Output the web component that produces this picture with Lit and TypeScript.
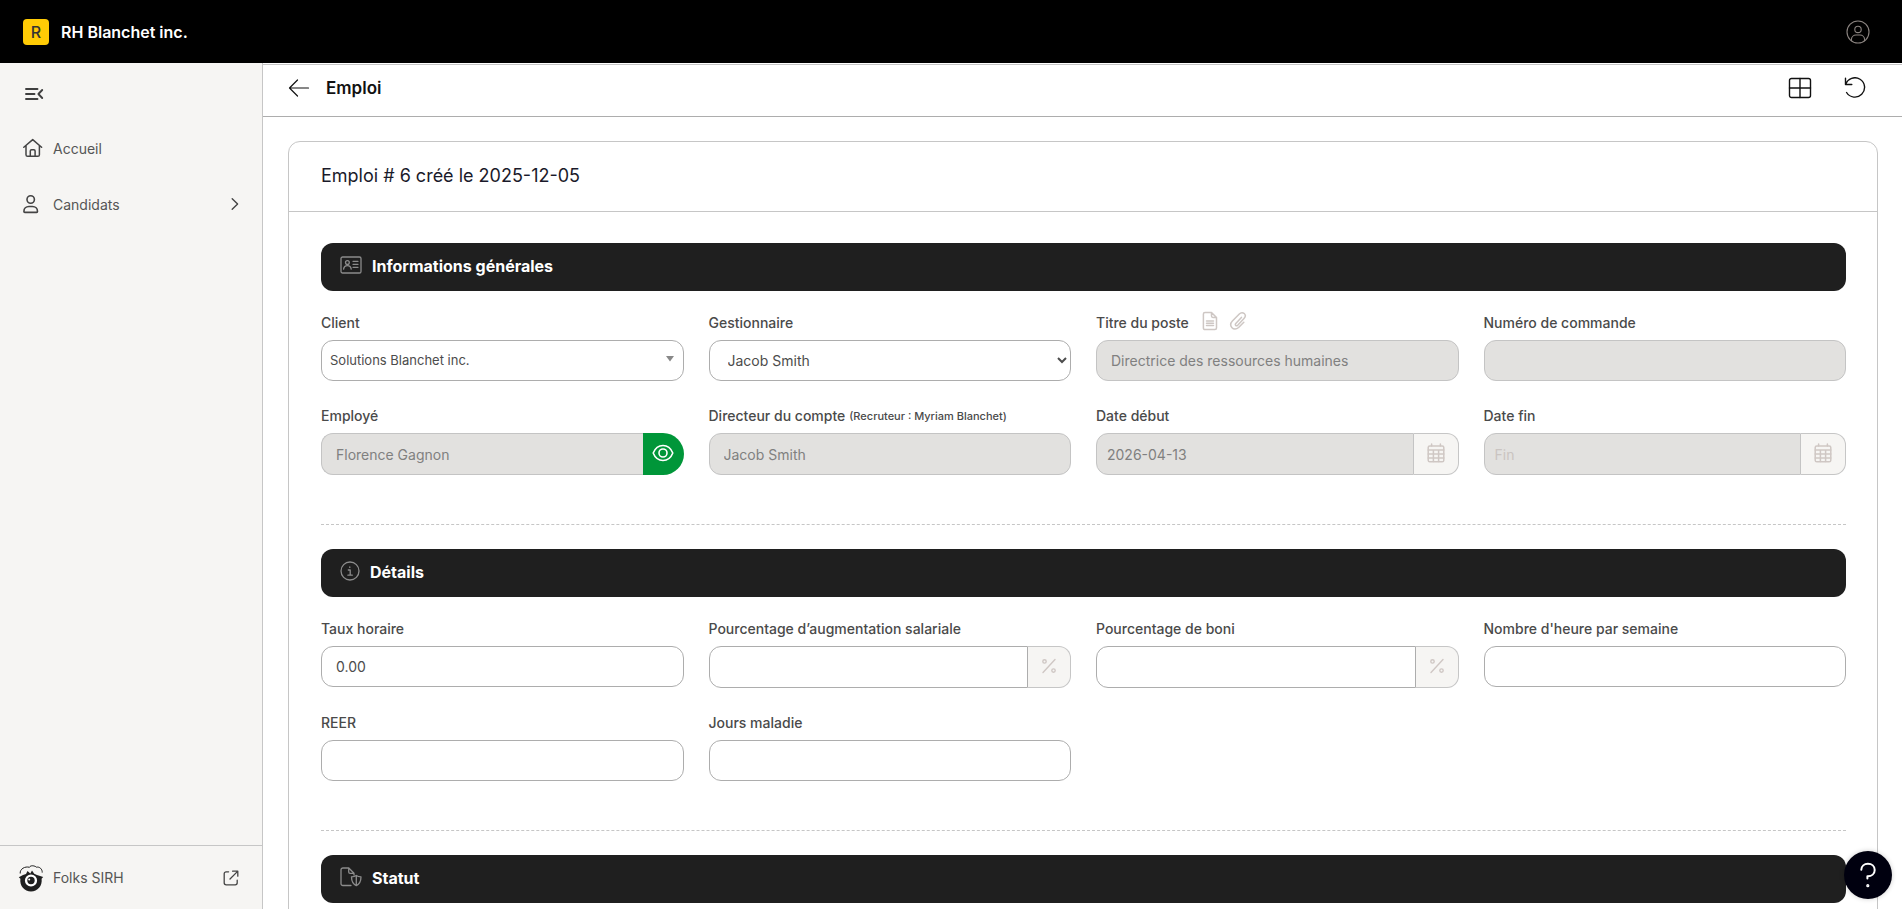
import { LitElement, html, css, svg, nothing, type TemplateResult } from "lit";
import { customElement, property } from "lit/decorators.js";

const line = (w: number, h: number, box: string, body: TemplateResult, stroke = 1.5) => html`
  <svg width=${w} height=${h} viewBox=${box} fill="none" stroke="currentColor" stroke-width=${stroke}
    stroke-linecap="round" stroke-linejoin="round" aria-hidden="true">${body}</svg>`;

const icons = {
  user: () => line(24, 24, "0 0 24 24", svg`<circle cx="12" cy="12" r="11"/><circle cx="12" cy="9.4" r="3.2"/><path d="M5.4 20.6v-1.2a4.6 4.6 0 0 1 4.6-4.4h4a4.6 4.6 0 0 1 4.6 4.4v1.2"/>`, 1.1),
  collapse: () => line(20, 14, "0 0 20 14", svg`<path d="M2 2h11.500M2 7h8.500M2 12h11.500M18.200 3 14.400 7l3.800 4"/>`, 1.9),
  home: () => line(20, 20, "0 0 20 20", svg`<path d="M.8 9.200 9.700 1.600l8.900 7.600M3 7.500v9.200c0 1 .6 1.600 1.600 1.600h10.200c1 0 1.600-.6 1.600-1.600V7.500M7.300 18.200v-5.200c0-.8.4-1.200 1.200-1.200h2.400c.8 0 1.200.4 1.200 1.200v5.200"/>`),
  person: () => line(16, 20, "0 0 16 20", svg`<circle cx="7.700" cy="5.500" r="3.700"/><path d="M.9 17.500c0-3 2.200-5 5-5h3.600c2.800 0 5 2 5 5 0 .6-.3.900-.9.900H1.800c-.6 0-.9-.3-.9-.9z"/>`, 1.6),
  chevron: () => line(8, 14, "0 0 8 14", svg`<path d="M1.200 1.700 6.600 7 1.200 12.300"/>`, 1.4),
  external: () => line(16, 16, "0 0 16 16", svg`<path d="M5.600 1.800H3.200C2 1.800 1.200 2.600 1.200 3.800v9c0 1.200.8 2 2 2h9c1.200 0 2-.8 2-2v-2.600M9.600 1.200h5.200v5M14.600 1.400 7 9"/>`, 1.3),
  back: () => line(22, 18, "0 0 22 18", svg`<path d="M9.500 1 1.500 9l8 8M1.500 9h19"/>`, 1.2),
  grid: () => line(24, 22, "0 0 24 22", svg`<rect x="1.500" y="1.500" width="21" height="19" rx="2"/><path d="M12 1.500v19M1.500 11h21"/>`, 1.4),
  reset: () => line(22, 22, "0 0 22 22", svg`<path d="M1.500 1.200v6.300h6.300M1.700 7.300A9.700 9.700 0 1 1 2.600 15.500"/>`, 1.4),
  card: () => line(22, 18, "0 0 22 18", svg`<rect x="1" y="1" width="20" height="16" rx="1.600"/><circle cx="7.400" cy="6.500" r="1.900"/><path d="M3.600 13.200c.3-2.400 1.700-3.500 3.800-3.500s3.500 1.100 3.800 3.500M13 5.300h5M13 8.300h5M13 11.300h5"/>`, 1.300),
  info: () => line(20, 20, "0 0 20 20", svg`<circle cx="10" cy="10" r="9"/><path d="M8.300 9h1.900v5M7.900 14.200h4.400M9.800 5.900v.5"/>`, 1.300),
  shield: () => line(22, 20, "0 0 22 20", svg`<path d="M11 18.500H3c-1.200 0-2-.7-2-1.800V2.800C1 1.700 1.800 1 3 1h5.800L14 6.200V8M8.700 1v4c0 .9.500 1.400 1.400 1.400H14M11.500 9.800c1.800 0 3.300-.3 4.800-1.300 1.500 1 3 1.300 4.700 1.300 0 4.400-1.300 7.200-4.700 8.900-3.500-1.700-4.800-4.500-4.800-8.900zM16.300 8.600v10"/>`, 1.300),
  doc: () => line(16, 20, "0 0 16 20", svg`<path d="M3 1.500h6.500L14.500 6.500V17c0 1-.6 1.500-1.600 1.500H3c-1 0-1.600-.5-1.600-1.500V3c0-1 .6-1.500 1.600-1.500zM9.500 1.700V5c0 .9.500 1.400 1.400 1.400h3.400M4.500 10h7M4.500 12.300h7M4.500 14.600h7"/>`, 1.500),
  clip: () => line(18, 20, "0 0 18 20", svg`<path d="M12.400 6.400 6.800 12.400c-1.400 1.500.5 3.200 1.900 1.800l6.300-6.600c3.500-3.700-1.300-8.200-4.700-4.600L3.400 10.100c-4.300 4.500 1.200 11 6.200 6.400l5.200-5.300"/>`, 1.500),
  eye: () => line(22, 18, "0 0 22 18", svg`<path d="M1.200 9C3 4.500 6.600 1.500 11 1.500S19 4.500 20.800 9C19 13.500 15.400 16.500 11 16.500S3 13.500 1.200 9z"/><circle cx="11" cy="9" r="4"/>`, 1.600),
  calendar: () => line(18, 20, "0 0 18 20", svg`<rect x="1.200" y="3" width="15.600" height="15.800" rx="1.600"/><path d="M4.600 1v2M13.400 1v2M1.200 7h15.600M1.200 11h15.600M1.200 15h15.600M6.400 7v11.500M11.600 7v11.500"/>`, 1.500),
  percent: () => line(16, 16, "0 0 16 16", svg`<path d="M14 1.500 2 14.500"/><circle cx="3.500" cy="3.400" r="1.700"/><circle cx="12.500" cy="12.600" r="1.700"/>`, 1.400),
  caret: () => html`<svg width="8" height="6" viewBox="0 0 8 6" fill="currentColor" aria-hidden="true"><path d="M0 0h8L4 5.500z"/></svg>`,
  help: () => line(18, 26, "0 0 18 26", svg`<path d="M2.300 7.800C2.500 4.300 5.200 1.800 8.900 1.800c3.900 0 6.800 2.500 6.800 6.200 0 3.900-3.100 6.300-6.900 6.300h-.4v2.200"/><circle cx="8.800" cy="23.700" r=".6" fill="currentColor"/>`, 2),
  folks: () => html`<svg width="26" height="28" viewBox="0 0 26 28" aria-hidden="true">
    <path d="M2.200 9.500C1.700 5 7 2 11.500 3.300 12.500.8 17 1.800 18.500 3.200c3-.8 6 2 5.700 5.400" fill="none" stroke="#1f1f1f" stroke-width="1"/>
    <path d="M.8 13.200 5 11l3-1 1.500-3 2.800 2.600L14 6.500l2.200 3.200L19 11l6.200 2-1.600 1.800C24.600 22 19.500 27.500 13 27.500S1.400 22 2.400 14.800z" fill="#1f1f1f"/>
    <circle cx="13" cy="16.500" r="4.900" fill="#1f1f1f" stroke="#fff" stroke-width="2.400"/>
    <circle cx="11.200" cy="15.400" r="1" fill="#fff"/></svg>`,
};

interface Option {
  id: string;
  label: string;
  value?: string;
  placeholder?: string;
  note?: string;
  disabled?: boolean;
  kind?: "text" | "combo" | "select" | "plain-group" | "view" | "date" | "percent";
  tools?: boolean;
}

const general: Option[] = [
  { id: "client", label: "Client", value: "Solutions Blanchet inc.", kind: "combo" },
  { id: "manager", label: "Gestionnaire", value: "Jacob Smith", kind: "select" },
  { id: "title", label: "Titre du poste", value: "Directrice des ressources humaines", disabled: true, tools: true },
  { id: "order", label: "Numéro de commande", disabled: true },
  { id: "employee", label: "Employé", value: "Florence Gagnon", disabled: true, kind: "view" },
  { id: "director", label: "Directeur du compte", note: "(Recruteur : Myriam Blanchet)", value: "Jacob Smith", disabled: true, kind: "plain-group" },
  { id: "start", label: "Date début", value: "2026-04-13", disabled: true, kind: "date" },
  { id: "end", label: "Date fin", placeholder: "Fin", disabled: true, kind: "date" },
];

const details: Option[] = [
  { id: "rate", label: "Taux horaire", value: "0.00" },
  { id: "raise", label: "Pourcentage d’augmentation salariale", kind: "percent" },
  { id: "bonus", label: "Pourcentage de boni", kind: "percent" },
  { id: "hours", label: "Nombre d'heure par semaine" },
  { id: "reer", label: "REER" },
  { id: "sick", label: "Jours maladie" },
];

@customElement("form-field")
class FormField extends LitElement {
  @property({ attribute: false }) field!: Option;

  static styles = css`
    :host { display: block; min-width: 0; }
    * { box-sizing: border-box; }
    .head { display: flex; align-items: center; height: 33px; padding-bottom: 2px; color: #4a4a4a; font-size: 14px; line-height: 20px; font-weight: 500; white-space: nowrap; }
    .note { margin-left: 4px; font-size: 11px; }
    .tools { display: flex; gap: 11px; margin-left: 13px; padding-bottom: 4px; }
    .tool { display: flex; padding: 0; border: 0; background: none; color: #cec7c4; }
    .control {
      display: block; width: 100%; min-width: 0; height: 41px; margin: 0; padding: 0 14px; border: 1px solid #adadad;
      border-radius: 12px; background: #fff; color: #4c4c4c; font: 14px/20px Inter, sans-serif; outline: none;
    }
    .control:disabled { border-color: #c4c4c4; background: #e2e1df; color: #808080; opacity: 1; }
    .control::placeholder { color: #cac4c1; opacity: 1; }
    .group { position: relative; display: flex; height: 42px; }
    .group .control { flex: 1; height: 100%; }
    .joined .control { border-radius: 12px 0 0 12px; }
    .date .control { padding: 0 10px; }
    .addon {
      display: grid; place-items: center; width: 43px; padding: 0 0 2px; border: 1px solid #c6c6c6; border-left: 0;
      border-radius: 0 12px 12px 0; background: #f6f5f3; color: #cfc7c4;
    }
    .date .addon { width: 45px; }
    .view .control { border-right: 0; }
    .view .addon { width: 41px; border: 0; border-radius: 0 21px 21px 0; background: #009639; color: #fff; }
    .combo { position: relative; }
    .combo .control { appearance: none; padding: 0 8px 2px; font-size: 13px; }
    .combo svg { position: absolute; right: 10px; top: 16px; color: #888; pointer-events: none; }
    .select { padding: 0 0 0 14px; }
  `;

  private input() {
    const f = this.field;
    return html`<input class="control" id=${f.id} type="text" .value=${f.value ?? ""}
      placeholder=${f.placeholder ?? nothing} ?disabled=${!!f.disabled} />`;
  }

  private body() {
    const f = this.field;
    switch (f.kind) {
      case "combo":
        return html`<div class="combo"><select class="control" id=${f.id}><option>${f.value}</option></select>${icons.caret()}</div>`;
      case "select":
        return html`<select class="control select" id=${f.id}><option>${f.value}</option></select>`;
      case "plain-group":
        return html`<div class="group">${this.input()}</div>`;
      case "view":
        return html`<div class="group joined view">${this.input()}<button class="addon" type="button" aria-label="Voir">${icons.eye()}</button></div>`;
      case "date":
        return html`<div class="group joined date">${this.input()}<button class="addon" type="button" aria-label="Calendrier">${icons.calendar()}</button></div>`;
      case "percent":
        return html`<div class="group joined">${this.input()}<span class="addon">${icons.percent()}</span></div>`;
      default:
        return this.input();
    }
  }

  render() {
    const f = this.field;
    return html`
      <div class="head">
        <label for=${f.id}>${f.label}</label>
        ${f.note ? html`<span class="note">${f.note}</span>` : nothing}
        ${f.tools ? html`<span class="tools">
          <button class="tool" type="button" aria-label="Document">${icons.doc()}</button>
          <button class="tool" type="button" aria-label="Pièce jointe">${icons.clip()}</button></span>` : nothing}
      </div>
      ${this.body()}`;
  }
}

@customElement("app-root")
class AppRoot extends LitElement {
  static styles = css`
    :host { display: flex; flex-direction: column; height: 100vh; overflow: hidden; background: #fff; font-family: Inter, sans-serif; color: #444; }
    * { box-sizing: border-box; }
    h1, h2, h3 { margin: 0; }
    button { padding: 0; border: 0; background: none; color: inherit; font: inherit; cursor: pointer; }
    svg { display: block; flex: none; }
    .topbar { display: flex; flex: none; align-items: center; justify-content: space-between; height: 63px; padding: 0 32px 0 23px; background: #000; color: #fff; }
    .brand { display: flex; align-items: center; gap: 12px; font-size: 16px; font-weight: 600; }
    .logo { display: grid; place-items: center; width: 26px; height: 26px; border-radius: 4px; background: #ffcb05; color: #333; font-size: 16px; font-weight: 500; }
    .account { color: #8b8480; }
    .shell { display: flex; flex: 1; min-height: 0; }
    .side { display: flex; flex: none; flex-direction: column; width: 263px; border-right: 1px solid #c6c6c6; background: #f6f5f3; color: #3f3f3f; font-size: 14px; line-height: 20px; }
    .collapse { display: flex; margin: 24px 0 0 24px; align-self: flex-start; }
    .nav { display: flex; flex: 1; flex-direction: column; gap: 16px; padding-top: 28px; }
    .link { display: flex; align-items: center; height: 40px; padding: 0 23px; color: #555; text-decoration: none; }
    .glyph { width: 30px; color: #444; }
    .link .glyph, .link .end { padding-bottom: 2px; }
    .end { margin-left: auto; color: #444; }
    .foot { display: flex; align-items: center; height: 64px; padding: 0 23px 0 18px; border-top: 1px solid #c6c6c6; color: #555; text-decoration: none; }
    .foot .glyph { width: 35px; }
    .main { display: flex; flex: 1; flex-direction: column; min-width: 0; padding-top: 1px; }
    .bar { display: flex; flex: none; align-items: center; height: 53px; padding: 0 36px 5px 25px; border-top: 1px solid #c6c6c6; border-bottom: 1px solid #adadad; color: #111; }
    .bar h1 { margin-left: 16px; font-size: 17px; line-height: 24px; font-weight: 600; }
    .actions { display: flex; align-items: center; gap: 32px; margin-left: auto; }
    .scroll { flex: 1; min-height: 0; overflow: auto; scrollbar-width: none; padding: 24px 24px 24px 25px; }
    .card { border: 1px solid #c6c6c6; border-radius: 12px; }
    .title { padding: 22px 32px 23px; border-bottom: 1px solid #c6c6c6; color: #1a1a2a; font-size: 18px; line-height: 24px; font-weight: 400; }
    .content { padding: 31px 31px 31px 32px; }
    .band { display: flex; align-items: center; gap: 10px; height: 48px; padding: 0 19px 2px; border-radius: 12px; background: #1f1f1f; color: #8c8c8c; }
    .band h3 { color: #fff; font-size: 16px; line-height: 24px; font-weight: 700; }
    .band svg { margin-bottom: 2px; }
    .grid { display: grid; grid-template-columns: repeat(4, minmax(0, 1fr)); gap: 19px 25px; padding: 16px 0 49px; align-items: start; }
    .split { height: 0; margin: 0 0 24px; border: 0; border-top: 1px dashed #c6c6c6; }
    .help { position: fixed; right: 10px; bottom: 10px; display: grid; place-items: center; width: 48px; height: 48px; border-radius: 50%; background: #00000f; color: #fff; box-shadow: 0 0 5px rgba(0, 0, 0, .2); }
  `;

  private band(icon: TemplateResult, text: string) {
    return html`<header class="band">${icon}<h3>${text}</h3></header>`;
  }

  private grid(fields: Option[]) {
    return html`<div class="grid">${fields.map((f) => html`<form-field .field=${f}></form-field>`)}</div>`;
  }

  render() {
    return html`
      <header class="topbar">
        <div class="brand"><span class="logo">R</span><span>RH Blanchet inc.</span></div>
        <button class="account" type="button" aria-label="Compte">${icons.user()}</button>
      </header>
      <div class="shell">
        <aside class="side">
          <button class="collapse" type="button" aria-label="Réduire le menu">${icons.collapse()}</button>
          <nav class="nav">
            <a class="link" href="#"><span class="glyph">${icons.home()}</span>Accueil</a>
            <a class="link" href="#"><span class="glyph">${icons.person()}</span>Candidats<span class="end">${icons.chevron()}</span></a>
          </nav>
          <a class="foot" href="#"><span class="glyph">${icons.folks()}</span>Folks SIRH<span class="end">${icons.external()}</span></a>
        </aside>
        <main class="main">
          <div class="bar">
            <button type="button" aria-label="Retour">${icons.back()}</button>
            <h1>Emploi</h1>
            <div class="actions">
              <button type="button" aria-label="Disposition">${icons.grid()}</button>
              <button type="button" aria-label="Réinitialiser">${icons.reset()}</button>
            </div>
          </div>
          <div class="scroll">
            <article class="card">
              <h2 class="title">Emploi # 6 créé le 2025-12-05</h2>
              <form class="content">
                <section>${this.band(icons.card(), "Informations générales")}${this.grid(general)}</section>
                <hr class="split" />
                <section>${this.band(icons.info(), "Détails")}${this.grid(details)}</section>
                <hr class="split" />
                <section>${this.band(icons.shield(), "Statut")}</section>
              </form>
            </article>
          </div>
        </main>
      </div>
      <button class="help" type="button" aria-label="Aide">${icons.help()}</button>`;
  }
}
